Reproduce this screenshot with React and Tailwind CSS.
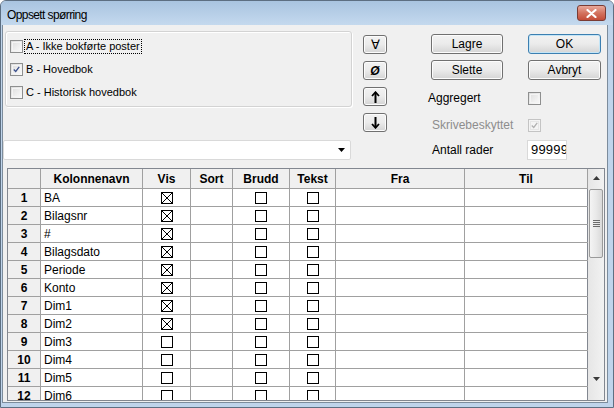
import React from 'react';

const rows = [
  { name: 'BA', vis: true },
  { name: 'Bilagsnr', vis: true },
  { name: '#', vis: true },
  { name: 'Bilagsdato', vis: true },
  { name: 'Periode', vis: true },
  { name: 'Konto', vis: true },
  { name: 'Dim1', vis: true },
  { name: 'Dim2', vis: true },
  { name: 'Dim3', vis: false },
  { name: 'Dim4', vis: false },
  { name: 'Dim5', vis: false },
  { name: 'Dim6', vis: false },
];

const cols = [
  { key: 'nr', label: '', w: 'w-[33px]' },
  { key: 'name', label: 'Kolonnenavn', w: 'w-[102px]' },
  { key: 'vis', label: 'Vis', w: 'w-[48px]' },
  { key: 'sort', label: 'Sort', w: 'w-[42px]' },
  { key: 'brudd', label: 'Brudd', w: 'w-[57px]' },
  { key: 'tekst', label: 'Tekst', w: 'w-[46px]' },
  { key: 'fra', label: 'Fra', w: 'w-[129px]' },
  { key: 'til', label: 'Til', w: 'w-[123px]' },
];

function WinCheck({ checked, disabled }) {
  return (
    <div
      className={`w-[13px] h-[13px] border flex items-center justify-center ${
        disabled ? 'border-[#c4c4c4] bg-[#f4f4f4]' : 'border-[#8e8f8f] bg-gradient-to-br from-[#dcdcdc] to-[#fcfcfc]'
      }`}
    >
      <div className={`w-[9px] h-[9px] border ${disabled ? 'border-[#e6e6e6]' : 'border-[#f4f4f4]'} flex items-center justify-center`}>
        {checked && (
          <svg width="9" height="9" viewBox="0 0 9 9">
            <path d="M1 4.5 L3.5 7 L8 1" fill="none" stroke={disabled ? '#b0b0b0' : '#3a4f8c'} strokeWidth="1.6" />
          </svg>
        )}
      </div>
    </div>
  );
}

function GridBox({ crossed }) {
  return (
    <div className="w-[12px] h-[12px] border border-black bg-white">
      {crossed && (
        <svg width="10" height="10" viewBox="0 0 10 10" className="block">
          <path d="M0 0 L10 10 M10 0 L0 10" stroke="#000" strokeWidth="1" />
        </svg>
      )}
    </div>
  );
}

function WinButton({ children, className = '', primary }) {
  return (
    <div
      className={`flex items-center justify-center rounded-[3px] border ${
        primary ? 'border-[#3c7fb1] shadow-[inset_0_0_0_1px_#c4e5f6]' : 'border-[#707070] shadow-[inset_0_0_0_1px_#fcfcfc]'
      } bg-gradient-to-b from-[#f2f2f2] via-[#ebebeb] to-[#d4d4d4] text-[12px] text-black ${className}`}
    >
      {children}
    </div>
  );
}

function Tri({ down, color = '#000' }) {
  return (
    <svg width="7" height="4" viewBox="0 0 7 4" className="block">
      <path d={down ? 'M0 0 L7 0 L3.5 4 Z' : 'M0 4 L7 4 L3.5 0 Z'} fill={color} />
    </svg>
  );
}

function Arrow({ down }) {
  return (
    <svg width="9" height="12" viewBox="0 0 9 12" className={down ? 'block rotate-180' : 'block'}>
      <path d="M4.5 1.5 L4.5 12" stroke="#000" strokeWidth="2" />
      <path d="M1 5 L4.5 1.2 L8 5" fill="none" stroke="#000" strokeWidth="1.8" />
    </svg>
  );
}

export default function App() {
  return (
    <div className="w-[614px] h-[408px] overflow-hidden bg-[#bfd4eb] border border-[#5d6f82] rounded-t-[6px] flex flex-col font-['Liberation_Sans',Arial,sans-serif] text-[11px] text-black">
      {/* Title bar */}
      <div className="h-[24px] flex items-start justify-between pl-[6px] pr-[7px] bg-gradient-to-b from-[#a9c4e0] to-[#c4d9ee]">
        <span className="mt-[5px] text-[12px] tracking-[-0.6px]">Oppsett spørring</span>
        <div className="mt-[4px] w-[29px] h-[16px] rounded-[3px] border border-[#7a3c34] bg-gradient-to-b from-[#e9a99b] via-[#d3735f] to-[#c34c38] flex items-center justify-center">
          <svg width="11" height="9" viewBox="0 0 11 9">
            <path d="M1.5 1 L9.5 8 M9.5 1 L1.5 8" stroke="#fff" strokeWidth="2.2" strokeLinecap="round" />
          </svg>
        </div>
      </div>

      {/* Client */}
      <div className="ml-[1px] mr-[5px] mb-[4px] flex-1 bg-[#f0f0f0] border-x border-b border-[#7c8c9c] flex flex-col">
        <div className="h-[143px] flex">
          {/* Left column */}
          <div className="w-[349px] flex flex-col">
            <div className="ml-[2px] mt-[6px] w-[347px] h-[76px] rounded-[3px] border border-[#d3d3d3] shadow-[inset_1px_1px_0_#fff,1px_1px_0_#fff] pt-[3px] pl-[4px]">
              {[
                { label: 'A - Ikke bokførte poster', checked: false, focus: true },
                { label: 'B - Hovedbok', checked: true },
                { label: 'C - Historisk hovedbok', checked: false },
              ].map((it) => (
                <div key={it.label} className="h-[23px] flex items-center">
                  <WinCheck checked={it.checked} />
                  <span className={`ml-[1px] px-[1px] leading-[13px] border border-dotted ${it.focus ? 'border-black' : 'border-transparent'}`}>
                    {it.label}
                  </span>
                </div>
              ))}
            </div>
            <div className="mt-[33px] w-[348px] h-[20px] bg-white border border-[#d9d9d9] rounded-[2px] flex items-center justify-end pr-[5px]">
              <Tri down />
            </div>
          </div>

          {/* Arrow buttons */}
          <div className="ml-[11px] mt-[10px] flex flex-col gap-[7px]">
            <WinButton className="w-[24px] h-[19px] text-[13px]">∀</WinButton>
            <WinButton className="w-[24px] h-[19px] text-[12px] italic font-bold">Ø</WinButton>
            <WinButton className="w-[24px] h-[19px]">
              <Arrow />
            </WinButton>
            <WinButton className="w-[24px] h-[19px]">
              <Arrow down />
            </WinButton>
          </div>

          {/* Right section */}
          <div className="ml-[41px] mt-[9px] flex flex-col">
            <div className="flex gap-[25px] ml-[3px]">
              <WinButton className="w-[72px] h-[20px]">Lagre</WinButton>
              <WinButton primary className="w-[73px] h-[20px]">OK</WinButton>
            </div>
            <div className="flex gap-[25px] ml-[3px] mt-[6px]">
              <WinButton className="w-[72px] h-[20px]">Slette</WinButton>
              <WinButton className="w-[73px] h-[20px]">Avbryt</WinButton>
            </div>
            <div className="flex items-center h-[20px] mt-[8px]">
              <span className="w-[100px] text-[12px]">Aggregert</span>
              <WinCheck />
            </div>
            <div className="flex items-center h-[20px] mt-[7px]">
              <span className="w-[100px] pl-[4px] text-[12px] text-[#8d8d8d]">Skrivebeskyttet</span>
              <WinCheck checked disabled />
            </div>
            <div className="flex items-center h-[20px] mt-[5px]">
              <span className="w-[99px] pl-[4px] text-[12px]">Antall rader</span>
              <div className="w-[40px] h-[20px] bg-white border border-[#d9d9d9] overflow-hidden flex items-center pl-[3px]">
                <span className="text-[13px] tracking-[0.2px] whitespace-nowrap">99999</span>
              </div>
            </div>
          </div>
        </div>

        {/* Grid */}
        <div className="ml-[4px] w-[598px] h-[233px] border border-[#828790] bg-white flex overflow-hidden">
          <div className="w-[580px] flex flex-col">
            <div className="h-[20px] flex shrink-0 bg-[#f0f0f0] border-b border-[#a0a0a0]">
              {cols.map((c) => (
                <div key={c.key} className={`${c.w} shrink-0 border-r border-[#a0a0a0] flex items-center justify-center font-bold text-[12px]`}>
                  {c.label}
                </div>
              ))}
            </div>
            {rows.map((r, i) => (
              <div key={r.name} className="h-[18px] flex shrink-0 border-b border-[#a0a0a0]">
                <div className="w-[33px] shrink-0 border-r border-[#a0a0a0] bg-[#f0f0f0] flex items-center justify-center font-bold text-[12px]">
                  {i + 1}
                </div>
                <div className="w-[102px] shrink-0 border-r border-[#a0a0a0] flex items-center pl-[3px] text-[12px]">{r.name}</div>
                <div className="w-[48px] shrink-0 border-r border-[#a0a0a0] flex items-center justify-center">
                  <GridBox crossed={r.vis} />
                </div>
                <div className="w-[42px] shrink-0 border-r border-[#a0a0a0]" />
                <div className="w-[57px] shrink-0 border-r border-[#a0a0a0] flex items-center justify-center">
                  <GridBox />
                </div>
                <div className="w-[46px] shrink-0 border-r border-[#a0a0a0] flex items-center justify-center">
                  <GridBox />
                </div>
                <div className="w-[129px] shrink-0 border-r border-[#a0a0a0]" />
                <div className="w-[123px] shrink-0 border-r border-[#828790]" />
              </div>
            ))}
          </div>

          {/* Scrollbar */}
          <div className="w-[16px] flex flex-col bg-gradient-to-r from-[#e6e6e6] to-[#f2f2f2]">
            <div className="h-[17px] flex items-center justify-center">
              <Tri color="#3a3a3a" />
            </div>
            <div className="mt-[3px] mx-[1px] h-[69px] rounded-[2px] border border-[#9a9a9a] bg-gradient-to-r from-[#f4f4f4] via-[#e9e9e9] to-[#d9d9d9] flex flex-col items-center justify-center gap-[1px]">
              <div className="w-[7px] h-[1px] bg-[#6b6b6b]" />
              <div className="w-[7px] h-[1px] bg-[#6b6b6b]" />
              <div className="w-[7px] h-[1px] bg-[#6b6b6b]" />
              <div className="w-[7px] h-[1px] bg-[#6b6b6b]" />
            </div>
            <div className="flex-1" />
            <div className="h-[17px] mb-[13px] flex items-center justify-center">
              <Tri down color="#3a3a3a" />
            </div>
          </div>
        </div>
      </div>
    </div>
  );
}
